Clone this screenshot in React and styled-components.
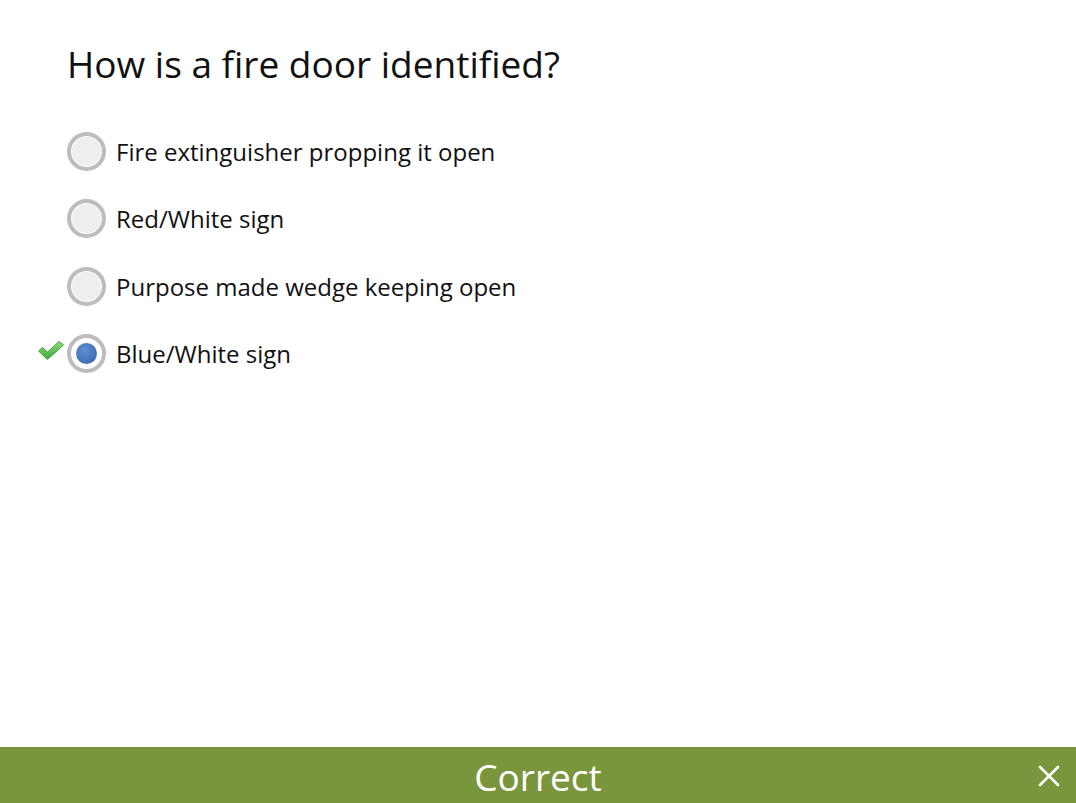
import React from "react";
import styled, { createGlobalStyle } from "styled-components";

const Global = createGlobalStyle`
  html, body { margin: 0; padding: 0; background: #fff; }
  body { font-family: "Open Sans", "Noto Sans", sans-serif; color: #111; }
`;

const Page = styled.div`
  width: 1076px;
  height: 803px;
  display: flex;
  flex-direction: column;
  overflow: hidden;
`;

const Main = styled.main`
  flex: 1;
  padding: 38px 0 0 67px;
`;

const Question = styled.h1`
  margin: 0 0 42px;
  font-size: 37px;
  font-weight: 400;
  line-height: 52px;
  color: #111;
`;

const Options = styled.div`
  display: flex;
  flex-direction: column;
  gap: 29.5px;
`;

const Option = styled.label`
  position: relative;
  display: flex;
  align-items: center;
  gap: 10px;
  height: 38px;
  font-size: 24px;
  color: #111;
`;

const Radio = styled.span`
  box-sizing: border-box;
  width: 39px;
  height: 39px;
  border-radius: 50%;
  border: 4px solid #bdbdbd;
  background: ${(p) => (p.$checked ? "#fff" : "#eeeeee")};
  box-shadow: inset 0 0 0 1px #fff;
  display: flex;
  align-items: center;
  justify-content: center;
  flex: none;
`;

const Dot = styled.span`
  width: 21px;
  height: 21px;
  border-radius: 50%;
  background: radial-gradient(circle at 40% 35%, #5c8fd0 0%, #3f70b6 70%, #2f5d9e 100%);
`;

const Tick = styled.svg`
  position: absolute;
  left: -30px;
  top: 5px;
`;

const Footer = styled.footer`
  position: relative;
  height: 56px;
  box-sizing: border-box;
  padding-top: 3px;
  background: #7a963c;
  display: flex;
  align-items: center;
  justify-content: center;
  color: #fff;
  font-size: 37px;
  flex: none;
`;

const Close = styled.svg`
  position: absolute;
  right: 16px;
  top: 18px;
`;

const options = [
  "Fire extinguisher propping it open",
  "Red/White sign",
  "Purpose made wedge keeping open",
  "Blue/White sign",
];

export default function App() {
  return (
    <Page>
      <Global />
      <Main>
        <Question>How is a fire door identified?</Question>
        <Options>
          {options.map((o, i) => {
            const checked = i === 3;
            return (
              <Option key={o}>
                {checked && (
                  <Tick width="28" height="21" viewBox="0 0 28 21">
                    <defs>
                      <linearGradient id="tg" x1="0" y1="0" x2="0" y2="1">
                        <stop offset="0" stopColor="#8fdc72" />
                        <stop offset="1" stopColor="#3ca838" />
                      </linearGradient>
                    </defs>
                    <path
                      d="M1.5 11 L5.5 7.5 L10.5 12 L22 1.5 L26.5 5 L10.5 19.5 Z"
                      fill="url(#tg)"
                      stroke="#47a441"
                      strokeWidth="1"
                      strokeLinejoin="round"
                    />
                  </Tick>
                )}
                <Radio $checked={checked}>{checked && <Dot />}</Radio>
                {o}
              </Option>
            );
          })}
        </Options>
      </Main>
      <Footer>
        Correct
        <Close width="22" height="22" viewBox="0 0 22 22">
          <path d="M2 2 L20 20 M20 2 L2 20" stroke="#fff" strokeWidth="2.6" strokeLinecap="round" />
        </Close>
      </Footer>
    </Page>
  );
}
